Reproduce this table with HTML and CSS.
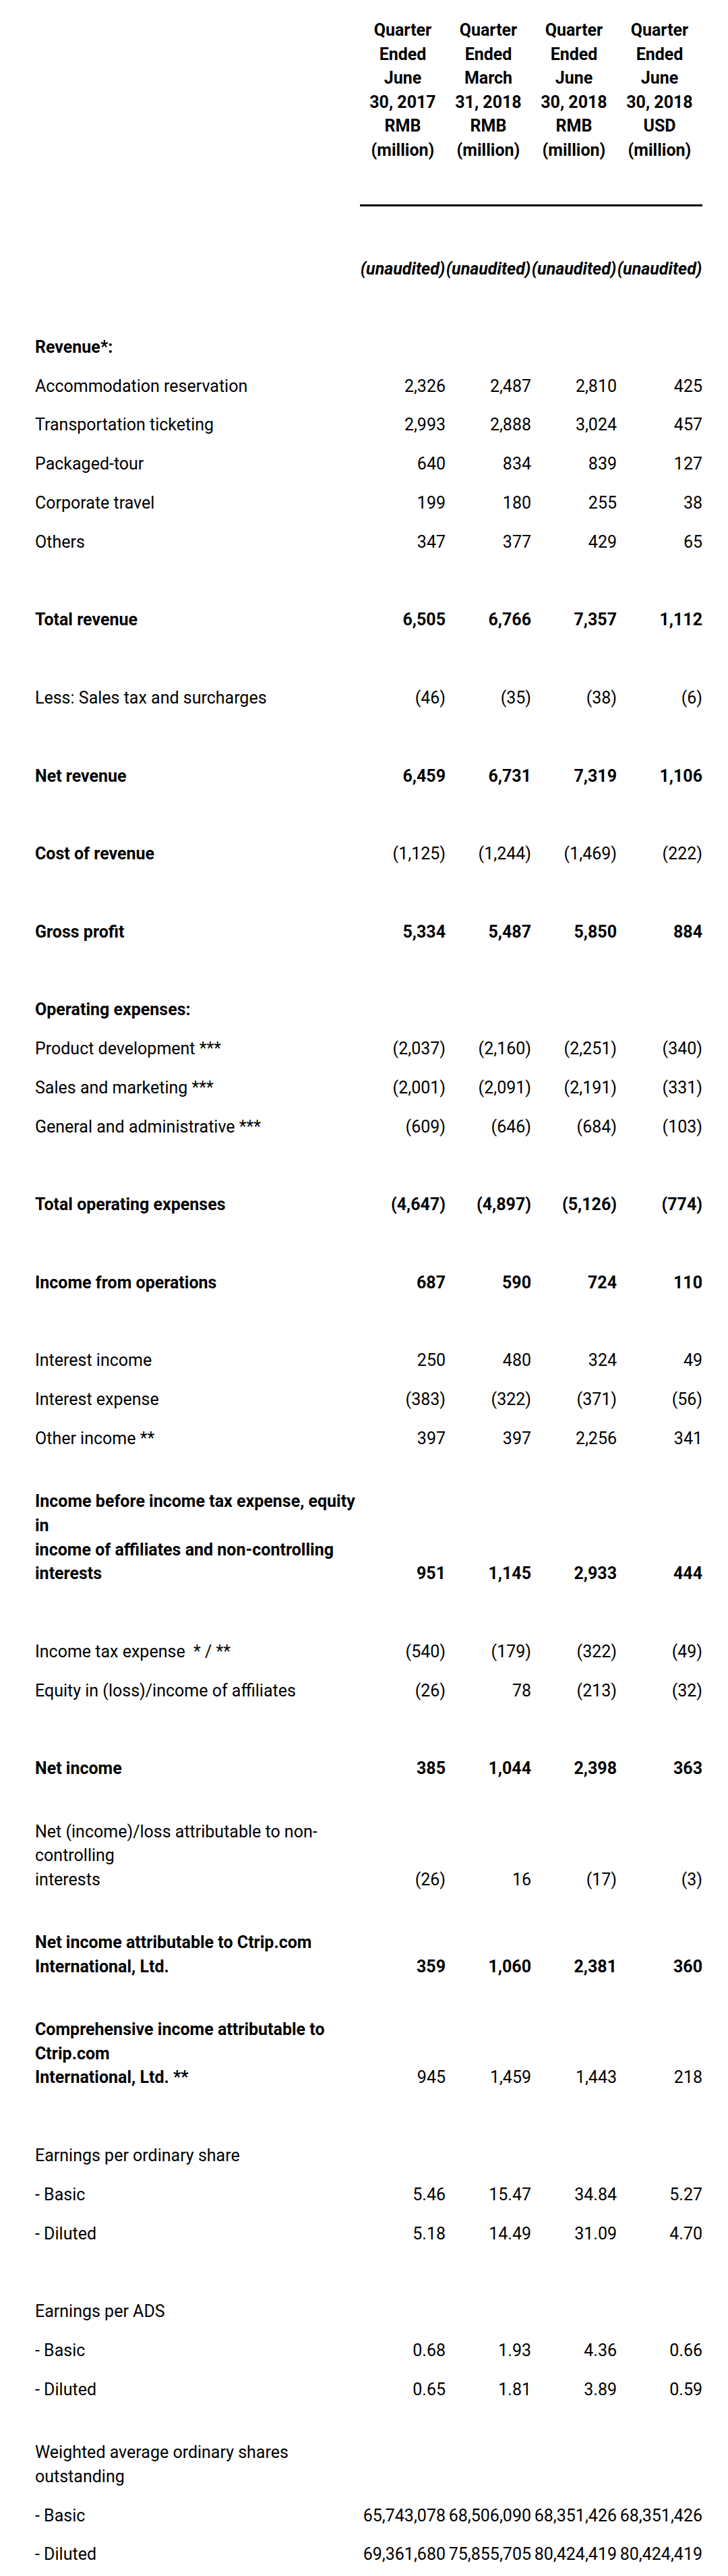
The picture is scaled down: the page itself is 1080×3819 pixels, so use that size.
FILE: index.html
```html
<!DOCTYPE html>
<html lang="en">
<head>
<meta charset="utf-8">
<title>Ctrip.com International, Ltd. - Unaudited Consolidated Statements of Income</title>
<link rel="stylesheet" href="styles.css">
</head>
<body>
<div class="page">
<table class="fin">
  <colgroup>
    <col class="c-label">
    <col class="c-num"><col class="c-num"><col class="c-num"><col class="c-num">
  </colgroup>
  <thead>
    <tr class="head">
      <th></th>
      <th>Quarter<br>Ended<br>June<br>30, 2017<br>RMB<br>(million)</th>
      <th>Quarter<br>Ended<br>March<br>31, 2018<br>RMB<br>(million)</th>
      <th>Quarter<br>Ended<br>June<br>30, 2018<br>RMB<br>(million)</th>
      <th>Quarter<br>Ended<br>June<br>30, 2018<br>USD<br>(million)</th>
    </tr>
    <tr class="rule">
      <td></td><td class="ul"></td><td class="ul"></td><td class="ul"></td><td class="ul"></td>
    </tr>
    <tr class="gap-top"><td></td><td></td><td></td><td></td><td></td></tr>
    <tr class="aud">
      <td></td><td>(unaudited)</td><td>(unaudited)</td><td>(unaudited)</td><td>(unaudited)</td>
    </tr>
  </thead>
  <tbody>
    <tr class="gap"><td colspan="5"></td></tr>
    <tr class="b"><td>Revenue*:</td><td></td><td></td><td></td><td></td></tr>
    <tr><td>Accommodation reservation</td><td>2,326</td><td>2,487</td><td>2,810</td><td>425</td></tr>
    <tr><td>Transportation ticketing</td><td>2,993</td><td>2,888</td><td>3,024</td><td>457</td></tr>
    <tr><td>Packaged-tour</td><td>640</td><td>834</td><td>839</td><td>127</td></tr>
    <tr><td>Corporate travel</td><td>199</td><td>180</td><td>255</td><td>38</td></tr>
    <tr><td>Others</td><td>347</td><td>377</td><td>429</td><td>65</td></tr>
    <tr class="gap"><td colspan="5"></td></tr>
    <tr class="b"><td>Total revenue</td><td>6,505</td><td>6,766</td><td>7,357</td><td>1,112</td></tr>
    <tr class="gap"><td colspan="5"></td></tr>
    <tr><td>Less: Sales tax and surcharges</td><td>(46)</td><td>(35)</td><td>(38)</td><td>(6)</td></tr>
    <tr class="gap"><td colspan="5"></td></tr>
    <tr class="b"><td>Net revenue</td><td>6,459</td><td>6,731</td><td>7,319</td><td>1,106</td></tr>
    <tr class="gap"><td colspan="5"></td></tr>
    <tr class="bl"><td>Cost of revenue</td><td>(1,125)</td><td>(1,244)</td><td>(1,469)</td><td>(222)</td></tr>
    <tr class="gap"><td colspan="5"></td></tr>
    <tr class="b"><td>Gross profit</td><td>5,334</td><td>5,487</td><td>5,850</td><td>884</td></tr>
    <tr class="gap"><td colspan="5"></td></tr>
    <tr class="b"><td>Operating expenses:</td><td></td><td></td><td></td><td></td></tr>
    <tr><td>Product development ***</td><td>(2,037)</td><td>(2,160)</td><td>(2,251)</td><td>(340)</td></tr>
    <tr><td>Sales and marketing ***</td><td>(2,001)</td><td>(2,091)</td><td>(2,191)</td><td>(331)</td></tr>
    <tr><td>General and administrative ***</td><td>(609)</td><td>(646)</td><td>(684)</td><td>(103)</td></tr>
    <tr class="gap"><td colspan="5"></td></tr>
    <tr class="b"><td>Total operating expenses</td><td>(4,647)</td><td>(4,897)</td><td>(5,126)</td><td>(774)</td></tr>
    <tr class="gap"><td colspan="5"></td></tr>
    <tr class="b"><td>Income from operations</td><td>687</td><td>590</td><td>724</td><td>110</td></tr>
    <tr class="gap"><td colspan="5"></td></tr>
    <tr><td>Interest income</td><td>250</td><td>480</td><td>324</td><td>49</td></tr>
    <tr><td>Interest expense</td><td>(383)</td><td>(322)</td><td>(371)</td><td>(56)</td></tr>
    <tr><td>Other income **</td><td>397</td><td>397</td><td>2,256</td><td>341</td></tr>
    <tr class="gap"><td colspan="5"></td></tr>
    <tr class="b"><td>Income before income tax expense, equity in<br>income of affiliates and non-controlling<br>interests</td><td>951</td><td>1,145</td><td>2,933</td><td>444</td></tr>
    <tr class="gap"><td colspan="5"></td></tr>
    <tr><td>Income tax expense&nbsp; * / **</td><td>(540)</td><td>(179)</td><td>(322)</td><td>(49)</td></tr>
    <tr><td>Equity in (loss)/income of affiliates</td><td>(26)</td><td>78</td><td>(213)</td><td>(32)</td></tr>
    <tr class="gap"><td colspan="5"></td></tr>
    <tr class="b"><td>Net income</td><td>385</td><td>1,044</td><td>2,398</td><td>363</td></tr>
    <tr class="gap"><td colspan="5"></td></tr>
    <tr><td>Net (income)/loss attributable to non-controlling<br>interests</td><td>(26)</td><td>16</td><td>(17)</td><td>(3)</td></tr>
    <tr class="gap"><td colspan="5"></td></tr>
    <tr class="b"><td>Net income attributable to Ctrip.com International, Ltd.</td><td>359</td><td>1,060</td><td>2,381</td><td>360</td></tr>
    <tr class="gap"><td colspan="5"></td></tr>
    <tr class="bl"><td>Comprehensive income attributable to Ctrip.com<br>International, Ltd. **</td><td>945</td><td>1,459</td><td>1,443</td><td>218</td></tr>
    <tr class="gap"><td colspan="5"></td></tr>
    <tr><td>Earnings per ordinary share</td><td></td><td></td><td></td><td></td></tr>
    <tr><td>- Basic</td><td>5.46</td><td>15.47</td><td>34.84</td><td>5.27</td></tr>
    <tr><td>- Diluted</td><td>5.18</td><td>14.49</td><td>31.09</td><td>4.70</td></tr>
    <tr class="gap"><td colspan="5"></td></tr>
    <tr><td>Earnings per ADS</td><td></td><td></td><td></td><td></td></tr>
    <tr><td>- Basic</td><td>0.68</td><td>1.93</td><td>4.36</td><td>0.66</td></tr>
    <tr><td>- Diluted</td><td>0.65</td><td>1.81</td><td>3.89</td><td>0.59</td></tr>
    <tr class="gap"><td colspan="5"></td></tr>
    <tr><td>Weighted average ordinary shares outstanding</td><td></td><td></td><td></td><td></td></tr>
    <tr><td>- Basic</td><td>65,743,078</td><td>68,506,090</td><td>68,351,426</td><td>68,351,426</td></tr>
    <tr><td>- Diluted</td><td>69,361,680</td><td>75,855,705</td><td>80,424,419</td><td>80,424,419</td></tr>
  </tbody>
</table>
</div>
</body>
</html>
```

FILE: styles.css
```css
html, body {
  margin: 0;
  padding: 0;
  background: #ffffff;
}

.page {
  padding: 27px 0 14px 52px;
  font-family: Roboto, "Liberation Sans", Arial, sans-serif;
  font-size: 25px;
  line-height: 35.6px;
  color: #000000;
}

.fin {
  width: 990px;
  table-layout: fixed;
  border-collapse: separate;
  border-spacing: 0;
}

.c-label { width: 482px; }
.c-num { width: 127px; }

.fin th,
.fin td {
  padding: 0;
  vertical-align: bottom;
  height: 57.8px;
}

.fin td + td {
  text-align: right;
  white-space: nowrap;
}

.fin td:first-child {
  text-align: left;
}

.head th {
  height: auto;
  font-weight: 700;
  text-align: center;
  white-space: nowrap;
}

.rule td {
  height: 62px;
}

.rule .ul {
  border-bottom: 3px solid #000000;
}

.gap-top td {
  height: 53.4px;
}

.aud td {
  font-weight: 700;
  font-style: italic;
  text-align: center;
  white-space: nowrap;
}

.aud td + td {
  text-align: center;
}

.b td {
  font-weight: 700;
}

.bl td:first-child {
  font-weight: 700;
}
```
